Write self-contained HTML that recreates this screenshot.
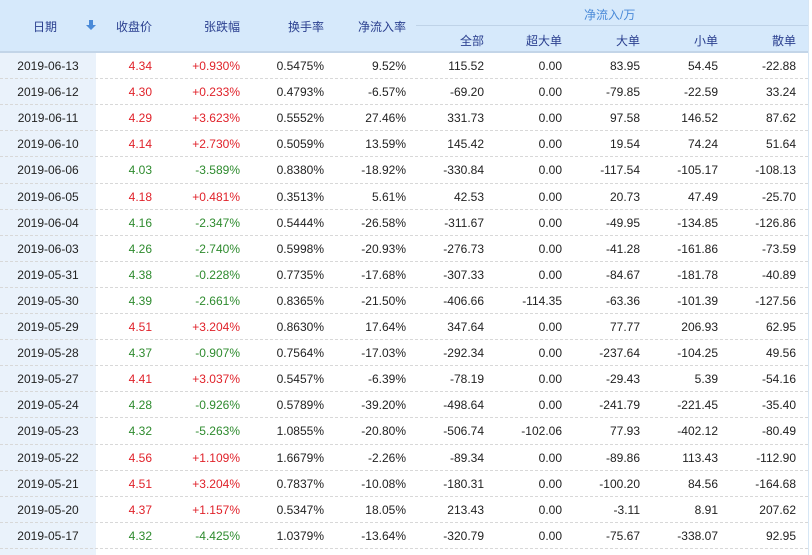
<!DOCTYPE html><html><head><meta charset="utf-8"><style>
body{margin:0;width:812px;height:555px;overflow:hidden;background:#fff;font-family:"Liberation Sans","Noto Sans CJK SC",sans-serif;font-size:12px;color:#222}
.hd{position:absolute;left:0;top:0;width:808px;height:51px;background:#d6e9fb;border-bottom:2px solid #c3d5e8}
.t{position:absolute;white-space:nowrap;color:#2a3f8f}
.row{position:absolute;left:0;width:808px;height:26px;border-bottom:1px dashed #d8d8d8}
.row span{position:absolute;top:6px;white-space:nowrap}
.d{left:0;width:96px;text-align:center}
.r{color:#e0222a}.g{color:#2e8b2e}
.vb{position:absolute;left:808px;top:0;width:1px;height:555px;background:#d6e6f5}
</style></head><body>
<div class="hd"></div>
<div style="position:absolute;left:0;top:53px;width:96px;height:502px;background:#eaf2fb"></div>
<div style="position:absolute;left:416px;top:25px;width:392px;height:1px;background:#bfd3e8"></div>
<span class="t" style="left:33px;top:18px">日期</span>
<svg style="position:absolute;left:86px;top:20px" width="10" height="10"><path d="M3 0h4v5h3L5 10 0 5h3z" fill="#4a8ad8"/></svg>
<span class="t" style="right:660px;top:18px">收盘价</span>
<span class="t" style="right:572px;top:18px">张跌幅</span>
<span class="t" style="right:488px;top:18px">换手率</span>
<span class="t" style="right:406px;top:18px">净流入率</span>
<span class="t" style="left:584px;top:6px;color:#4a8ad8">净流入/万</span>
<span class="t" style="right:328px;top:32px">全部</span>
<span class="t" style="right:250px;top:32px">超大单</span>
<span class="t" style="right:172px;top:32px">大单</span>
<span class="t" style="right:94px;top:32px">小单</span>
<span class="t" style="right:16px;top:32px">散单</span>
<div class="vb"></div>
<div id="b"></div>
<script>
var D=[["2019-06-13","4.34","+0.930%","0.5475%","9.52%","115.52","0.00","83.95","54.45","-22.88"],
["2019-06-12","4.30","+0.233%","0.4793%","-6.57%","-69.20","0.00","-79.85","-22.59","33.24"],
["2019-06-11","4.29","+3.623%","0.5552%","27.46%","331.73","0.00","97.58","146.52","87.62"],
["2019-06-10","4.14","+2.730%","0.5059%","13.59%","145.42","0.00","19.54","74.24","51.64"],
["2019-06-06","4.03","-3.589%","0.8380%","-18.92%","-330.84","0.00","-117.54","-105.17","-108.13"],
["2019-06-05","4.18","+0.481%","0.3513%","5.61%","42.53","0.00","20.73","47.49","-25.70"],
["2019-06-04","4.16","-2.347%","0.5444%","-26.58%","-311.67","0.00","-49.95","-134.85","-126.86"],
["2019-06-03","4.26","-2.740%","0.5998%","-20.93%","-276.73","0.00","-41.28","-161.86","-73.59"],
["2019-05-31","4.38","-0.228%","0.7735%","-17.68%","-307.33","0.00","-84.67","-181.78","-40.89"],
["2019-05-30","4.39","-2.661%","0.8365%","-21.50%","-406.66","-114.35","-63.36","-101.39","-127.56"],
["2019-05-29","4.51","+3.204%","0.8630%","17.64%","347.64","0.00","77.77","206.93","62.95"],
["2019-05-28","4.37","-0.907%","0.7564%","-17.03%","-292.34","0.00","-237.64","-104.25","49.56"],
["2019-05-27","4.41","+3.037%","0.5457%","-6.39%","-78.19","0.00","-29.43","5.39","-54.16"],
["2019-05-24","4.28","-0.926%","0.5789%","-39.20%","-498.64","0.00","-241.79","-221.45","-35.40"],
["2019-05-23","4.32","-5.263%","1.0855%","-20.80%","-506.74","-102.06","77.93","-402.12","-80.49"],
["2019-05-22","4.56","+1.109%","1.6679%","-2.26%","-89.34","0.00","-89.86","113.43","-112.90"],
["2019-05-21","4.51","+3.204%","0.7837%","-10.08%","-180.31","0.00","-100.20","84.56","-164.68"],
["2019-05-20","4.37","+1.157%","0.5347%","18.05%","213.43","0.00","-3.11","8.91","207.62"],
["2019-05-17","4.32","-4.425%","1.0379%","-13.64%","-320.79","0.00","-75.67","-338.07","92.95"]];
var R=[0,152,240,324,406,484,562,640,718,796],h="";
D.forEach(function(r,i){var t=Math.round(53+i*26.1),n=Math.round(53+(i+1)*26.1);var c=r[2][0]=="+"?"r":"g";h+='<div class="row" style="top:'+t+'px;height:'+(n-t-1)+'px"><span class="d">'+r[0]+'</span>';
for(var j=1;j<10;j++)h+='<span class="'+(j<3?c:'')+'" style="right:'+(808-R[j])+'px">'+r[j]+'</span>';h+='</div>';});
document.getElementById('b').innerHTML=h;
</script>
</body></html>
